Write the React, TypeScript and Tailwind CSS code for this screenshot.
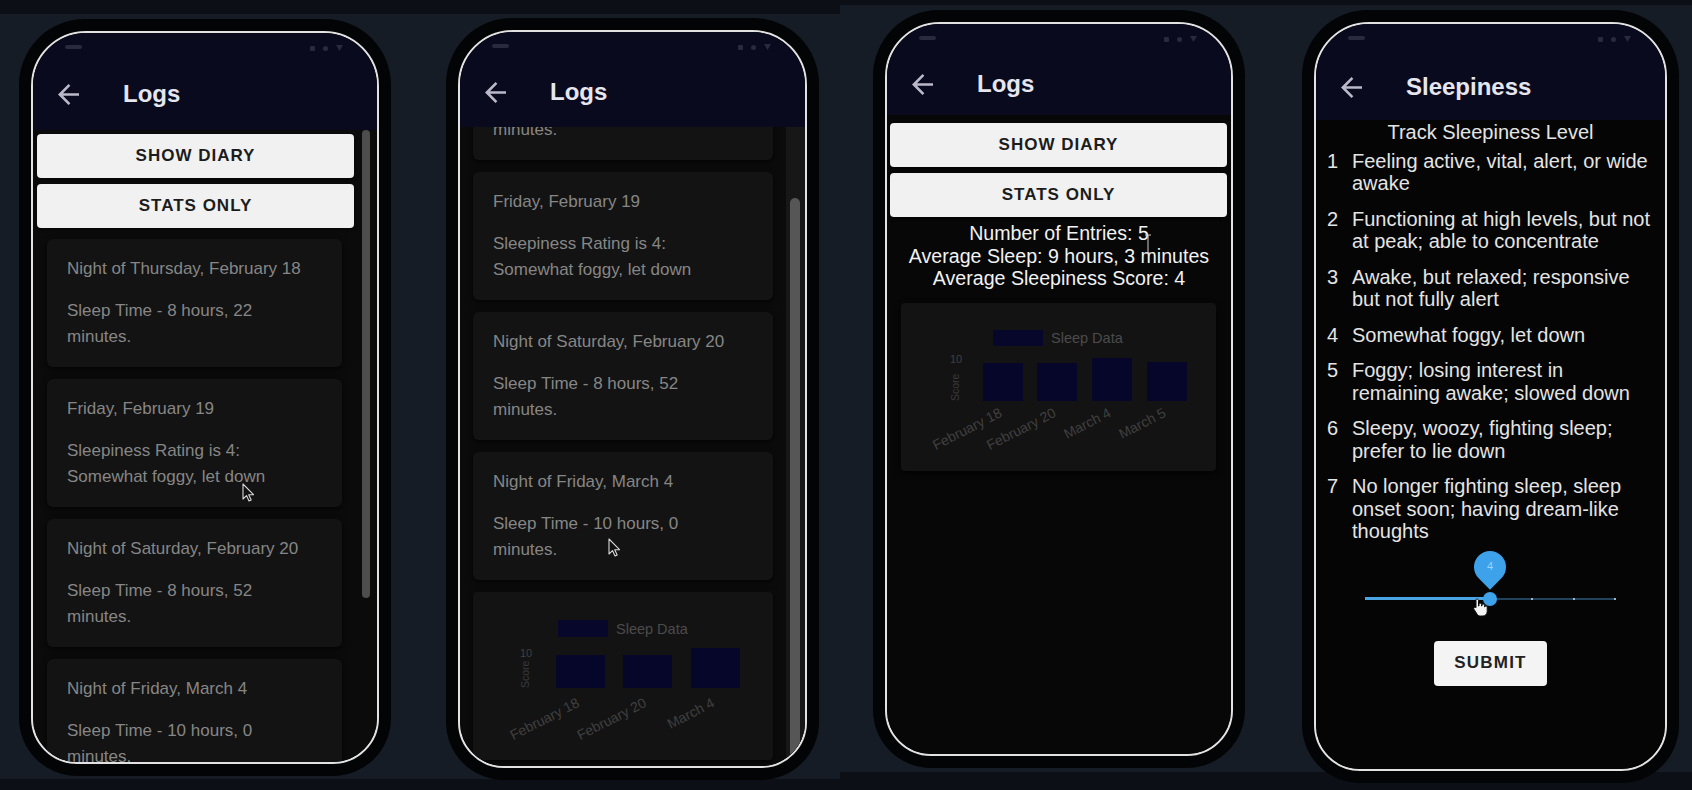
import React from 'react';

type Bar = { x: number; top: number; label: string };

interface ChartProps {
  width: number;
  legendX: number;
  legendY: number;
  legendH: number;
  barW: number;
  bottom: number;
  bars: Bar[];
  labelY: number;
  axisX: number;
  axisY: number;
}

// Phone frame: black bezel + white outlined screen
const Phone = ({ className, size, children }: { className: string; size: string; children: React.ReactNode }) => (
  <div className={`shrink-0 rounded-t-[66px] rounded-b-[58px] bg-[#030406] p-3 ${className}`}>
    <div className={`relative flex flex-col overflow-hidden rounded-t-[55px] rounded-b-[46px] border-2 border-[#e2e2e2] ${size}`}>
      {children}
    </div>
  </div>
);

const BackArrow = () => (
  <svg width="21" height="21" viewBox="4 4 16 16">
    <path d="M20 11H7.83l5.59-5.59L12 4l-8 8 8 8 1.41-1.41L7.83 13H20v-2z" fill="#b9b9c9" />
  </svg>
);

// statusH moves the title row up or down a few pixels per screenshot
const Header = ({ title, height, statusH = 'h-[32px]' }: { title: string; height: string; statusH?: string }) => (
  <div className={`shrink-0 bg-[#0a0a1e] ${height}`}>
    <div className={`flex items-start justify-between pl-[32px] pr-[34px] pt-[12px] ${statusH}`}>
      <div className="h-[4px] w-[17px] rounded-full bg-[#2a2a3e]" />
      <div className="flex items-center gap-[8px]">
        <div className="h-[5px] w-[5px] rounded-[1px] bg-[#2a2a3e]" />
        <div className="h-[5px] w-[5px] rounded-full bg-[#2a2a3e]" />
        <svg width="7" height="6" viewBox="0 0 7 6">
          <path d="M0 0H7L3.5 6Z" fill="#2a2a3e" />
        </svg>
      </div>
    </div>
    <div className="flex h-[56px] items-center pl-[25px]">
      <BackArrow />
      <span className="ml-[44px] text-[24px] font-bold leading-none text-[#e6e6ee]">{title}</span>
    </div>
  </div>
);

const LogButton = ({ label }: { label: string }) => (
  <div className="flex h-[44px] w-full items-center justify-center rounded-[4px] bg-[#f1f1f1] text-[17px] font-bold tracking-[1px] text-[#1c1c1c] shadow-[0_2px_3px_rgba(0,0,0,0.5)]">
    {label}
  </div>
);

const LogCard = ({ lines }: { lines: string[] }) => (
  <div className="h-[128px] shrink-0 rounded-[6px] bg-[#131313] px-5 pt-[17px] text-[17px] leading-[26px] text-[#868686] shadow-[0_2px_6px_rgba(0,0,0,0.8)]">
    <div className="whitespace-nowrap">{lines[0]}</div>
    <div className="mt-[16px]">
      {lines.slice(1).map((l) => (
        <div key={l} className="whitespace-nowrap">{l}</div>
      ))}
    </div>
  </div>
);

const SleepChart = ({ width, legendX, legendY, legendH, barW, bottom, bars, labelY, axisX, axisY }: ChartProps) => (
  <div className="h-[168px] shrink-0 rounded-[4px] bg-[#131313] shadow-[0_2px_6px_rgba(0,0,0,0.8)]">
    <svg width={width} height={168} className="block">
      <rect x={legendX} y={legendY} width={50} height={legendH} fill="#07072b" />
      <text x={legendX + 58} y={legendY + legendH / 2 + 5} fontSize={14.5} fill="#4b4b4b" fontFamily="Liberation Sans, Arial, sans-serif">
        Sleep Data
      </text>
      <text x={axisX - 9} y={axisY} fontSize={11} fill="#404040" fontFamily="Liberation Sans, Arial, sans-serif">
        10
      </text>
      <text
        x={axisX}
        y={bottom}
        fontSize={10.5}
        fill="#3a3a3a"
        fontFamily="Liberation Sans, Arial, sans-serif"
        transform={`rotate(-90 ${axisX} ${bottom})`}
      >
        Score
      </text>
      {bars.map((b) => (
        <rect key={b.label} x={b.x} y={b.top} width={barW} height={bottom - b.top} fill="#06062a" />
      ))}
      {bars.map((b) => {
        const cx = b.x + barW / 2;
        return (
          <text
            key={`l-${b.label}`}
            x={cx}
            y={labelY}
            textAnchor="end"
            fontSize={14}
            fill="#404040"
            fontFamily="Liberation Sans, Arial, sans-serif"
            transform={`rotate(-27 ${cx} ${labelY})`}
          >
            {b.label}
          </text>
        );
      })}
    </svg>
  </div>
);

const ArrowCursor = ({ className }: { className: string }) => (
  <svg width="13" height="19" viewBox="0 0 13 19" className={`absolute ${className}`}>
    <path d="M1 1 L1 16 L4.5 12.6 L7 18 L9.2 17 L6.7 11.7 L11.5 11.7 Z" fill="#111" stroke="#d8d8d8" strokeWidth="1.1" strokeLinejoin="round" />
  </svg>
);

const HandCursor = ({ className }: { className: string }) => (
  <svg width="19" height="21" viewBox="0 0 19 21" className={`absolute ${className}`}>
    <path
      d="M6 2c.9 0 1.5.7 1.5 1.5V9h.5V7.5c0-.8.6-1.3 1.3-1.3s1.2.5 1.2 1.3V9h.5V8.3c0-.8.6-1.3 1.3-1.3s1.2.5 1.2 1.3V10h.3c0-.7.6-1.2 1.2-1.2s1.2.5 1.2 1.2v4.5c0 2.5-2 4.5-4.5 4.5H9.5c-1.4 0-2.6-.7-3.4-1.8L3 12.3c-.4-.6-.3-1.4.3-1.8.6-.4 1.3-.3 1.7.2V3.5C5 2.7 5.2 2 6 2z"
      fill="#f4f4f4"
      stroke="#111"
      strokeWidth="1"
    />
  </svg>
);

const IBeam = ({ className }: { className: string }) => (
  <svg width="8" height="20" viewBox="0 0 8 20" className={`absolute ${className}`}>
    <path d="M1 1h2.5L4 1.6 4.5 1H7M4 1.6v16.8M1 19h2.5l.5-.6.5.6H7" stroke="#cfcfcf" strokeWidth="1" fill="none" />
  </svg>
);

const card1 = ['Night of Thursday, February 18', 'Sleep Time - 8 hours, 22', 'minutes.'];
const card2 = ['Friday, February 19', 'Sleepiness Rating is 4:', 'Somewhat foggy, let down'];
const card3 = ['Night of Saturday, February 20', 'Sleep Time - 8 hours, 52', 'minutes.'];
const card4 = ['Night of Friday, March 4', 'Sleep Time - 10 hours, 0', 'minutes.'];

const levels = [
  ['Feeling active, vital, alert, or wide', 'awake'],
  ['Functioning at high levels, but not', 'at peak; able to concentrate'],
  ['Awake, but relaxed; responsive', 'but not fully alert'],
  ['Somewhat foggy, let down'],
  ['Foggy; losing interest in', 'remaining awake; slowed down'],
  ['Sleepy, woozy, fighting sleep;', 'prefer to lie down'],
  ['No longer fighting sleep, sleep', 'onset soon; having dream-like', 'thoughts'],
];

export default function App() {
  return (
    <div className="flex h-[790px] w-[1692px] overflow-hidden font-['Liberation_Sans',Arial,sans-serif]">
      {/* left pair */}
      <div className="flex h-full w-[840px] shrink-0 items-start gap-[55px] bg-[linear-gradient(to_bottom,#0c1016_0px,#0c1016_14px,#161c25_14px,#161c25_779px,#0c1016_779px)] pl-[19px]">
        <Phone className="mt-[19px]" size="h-[733px] w-[348px]">
          <Header title="Logs" height="h-[97px]" statusH="h-[33px]" />
          <div className="flex min-h-0 flex-1 overflow-hidden bg-[#0b0b0b]">
            <div className="flex w-[323px] shrink-0 flex-col pt-[4px]">
              <div className="flex flex-col gap-[6px] pl-[4px] pr-[2px]">
                <LogButton label="SHOW DIARY" />
                <LogButton label="STATS ONLY" />
              </div>
              <div className="mt-[11px] flex flex-col gap-[12px] px-[14px]">
                <LogCard lines={card1} />
                <LogCard lines={card2} />
                <LogCard lines={card3} />
                <LogCard lines={card4} />
              </div>
            </div>
            <div className="flex-1 pl-[6px]">
              <div className="h-[468px] w-[8px] rounded-full bg-[#4d4d4d]" />
            </div>
          </div>
          <ArrowCursor className="left-[209px] top-[450px]" />
        </Phone>

        <Phone className="mt-[18px]" size="h-[738px] w-[349px]">
          <Header title="Logs" height="h-[95px]" />
          <div className="flex min-h-0 flex-1 overflow-hidden bg-[#0b0b0b]">
            <div className="-mt-[95px] flex w-[326px] shrink-0 flex-col gap-[12px] px-[13px]">
              <LogCard lines={card1} />
              <LogCard lines={card2} />
              <LogCard lines={card3} />
              <LogCard lines={card4} />
              <SleepChart
                width={300}
                legendX={85}
                legendY={28}
                legendH={17}
                barW={49}
                bottom={96}
                axisX={56}
                axisY={65}
                labelY={114}
                bars={[
                  { x: 83, top: 63, label: 'February 18' },
                  { x: 150, top: 63, label: 'February 20' },
                  { x: 218, top: 56, label: 'March 4' },
                ]}
              />
            </div>
            <div className="flex-1 bg-[#171717] pl-[4px] pt-[71px]">
              <div className="h-[560px] w-[10px] rounded-full bg-[#565656]" />
            </div>
          </div>
          <ArrowCursor className="left-[148px] top-[506px]" />
        </Phone>
      </div>

      {/* right pair */}
      <div className="flex h-full flex-1 items-start gap-[57px] bg-[linear-gradient(to_bottom,#0c1016_0px,#0c1016_5px,#161c25_5px,#161c25_772px,#0c1016_772px)] pl-[33px]">
        <Phone className="mt-[10px]" size="h-[734px] w-[348px]">
          <Header title="Logs" height="h-[91px]" />
          <div className="flex min-h-0 flex-1 flex-col overflow-hidden bg-[#070707] pt-[8px]">
            <div className="ml-[3px] flex w-[337px] flex-col gap-[6px]">
              <LogButton label="SHOW DIARY" />
              <LogButton label="STATS ONLY" />
            </div>
            <div className="mt-[5px] text-center text-[19.6px] leading-[22.5px] text-[#f2f2f2]">
              <div>Number of Entries: 5</div>
              <div>Average Sleep: 9 hours, 3 minutes</div>
              <div>Average Sleepiness Score: 4</div>
            </div>
            <div className="ml-[14px] mt-[13px] w-[315px]">
              <SleepChart
                width={315}
                legendX={92}
                legendY={27}
                legendH={16}
                barW={40}
                bottom={98}
                axisX={58}
                axisY={60}
                labelY={113}
                bars={[
                  { x: 82, top: 60, label: 'February 18' },
                  { x: 136, top: 60, label: 'February 20' },
                  { x: 191, top: 55, label: 'March 4' },
                  { x: 246, top: 59, label: 'March 5' },
                ]}
              />
            </div>
          </div>
          <IBeam className="left-[257px] top-[210px]" />
        </Phone>

        <Phone className="mt-[10px]" size="h-[749px] w-[353px]">
          <Header title="Sleepiness" height="h-[96px]" statusH="h-[35px]" />
          <div className="flex min-h-0 flex-1 flex-col overflow-hidden bg-[#050505] pt-[1px] text-[20px] leading-[22.5px] text-[#e4e4e4]">
            <div className="text-center">Track Sleepiness Level</div>
            <div className="mt-[6px] flex flex-col gap-[13px]">
              {levels.map((lines, i) => (
                <div key={i} className="flex">
                  <div className="w-[36px] shrink-0 pl-[11px]">{i + 1}</div>
                  <div>
                    {lines.map((l) => (
                      <div key={l} className="whitespace-nowrap">{l}</div>
                    ))}
                  </div>
                </div>
              ))}
            </div>

            {/* slider, value 4 of 7 */}
            <div className="relative mx-auto mt-[49px] h-[14px] w-[251px] shrink-0">
              <div className="absolute left-0 right-0 top-[6px] h-[2px] bg-[#22415a]" />
              <div className="absolute left-0 top-[5.5px] h-[3px] w-[125px] bg-[#4ba5e4]" />
              <div className="absolute left-[166px] top-[6px] h-[2px] w-[2px] bg-[#9fb6c6]" />
              <div className="absolute left-[208px] top-[6px] h-[2px] w-[2px] bg-[#9fb6c6]" />
              <div className="absolute left-[249px] top-[6px] h-[2px] w-[2px] bg-[#9fb6c6]" />
              <div className="absolute left-[118px] top-0 h-[14px] w-[14px] rounded-full bg-[#3ea2ea]" />
              <div className="absolute left-[109px] top-[-41px] h-[32px] w-[32px] rotate-45 rounded-[50%_50%_0_50%] bg-[#3ea2ea]" />
              <div className="absolute left-[109px] top-[-41px] flex h-[32px] w-[32px] items-center justify-center text-[11px] text-[#9ad3fb]">4</div>
            </div>

            <div className="mx-auto mt-[35px] flex h-[45px] w-[113px] shrink-0 items-center justify-center rounded-[4px] bg-[#f4f4f4] text-[17px] font-bold tracking-[1.2px] text-[#222]">
              SUBMIT
            </div>
          </div>
          <HandCursor className="left-[155px] top-[573px]" />
        </Phone>
      </div>
    </div>
  );
}
